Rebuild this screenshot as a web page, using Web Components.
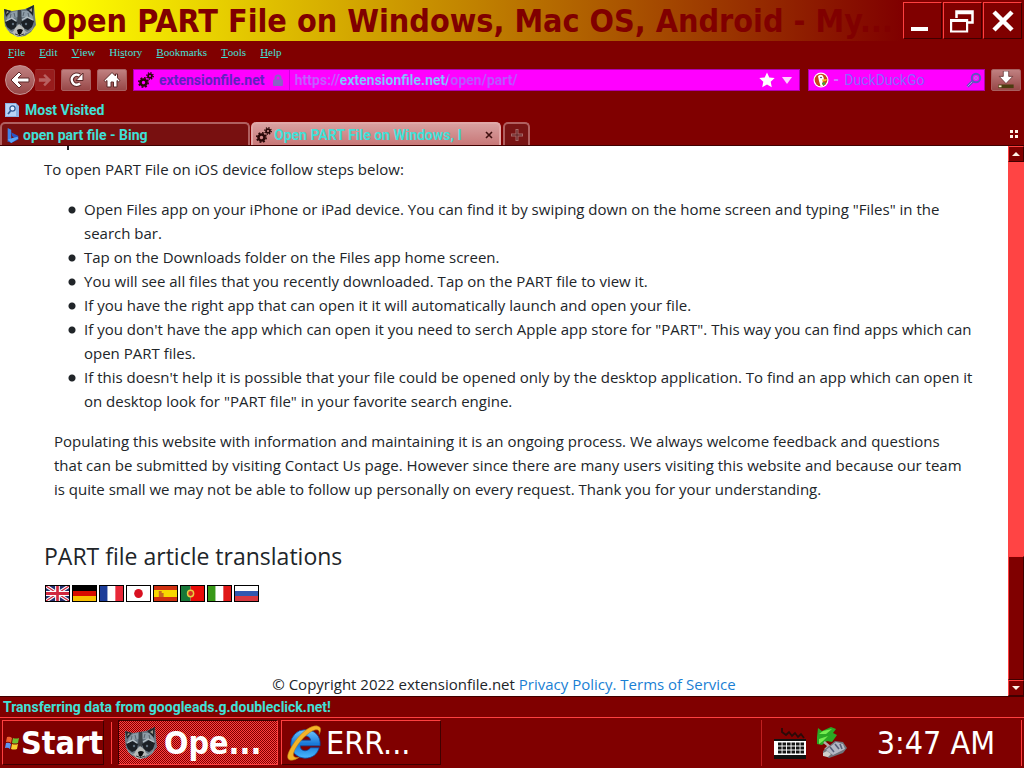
<!DOCTYPE html>
<html lang="en">
<head>
<meta charset="utf-8">
<title>Open PART File on Windows, Mac OS, Android</title>
<style>
  html, body { height: 100%; }
  body {
    margin: 0;
    overflow: hidden;
    --face: #800000;
    --hilite: #ff4040;
    --shadow: #400000;
    --text: #40e0d8;
    --field: #ff00ff;
    --caption: "DejaVu Sans Condensed", "DejaVu Sans", sans-serif;
    font: bold 14px/16px Roboto, "Liberation Sans", Arial, sans-serif;
    color: var(--text);
    background: var(--face);
  }
</style>
</head>
<body>
<desktop-screen>
  <title-bar slot="top" label="Open PART File on Windows, Mac OS, Android - My..."></title-bar>
  <menu-bar slot="top"></menu-bar>
  <nav-bar slot="top"></nav-bar>
  <bookmark-bar slot="top"></bookmark-bar>
  <tab-strip slot="top">
    <browser-tab icon="bing">open part file - Bing</browser-tab>
    <browser-tab icon="gears" active>Open PART File on Windows, I</browser-tab>
  </tab-strip>
  <article-page></article-page>
  <scroll-bar slot="side"></scroll-bar>
  <status-bar slot="bottom">Transferring data from googleads.g.doubleclick.net!</status-bar>
  <task-bar slot="bottom">
    <task-button icon="raccoon" active>Ope...</task-button>
    <task-button icon="ie">ERR...</task-button>
  </task-bar>
</desktop-screen>

<script>
const ICONS = {
  raccoon: `<svg viewBox="0 0 34 34">
    <path d="M2 5l8 2 6-1 7-1 9-4 1 12 1 8-5 7-6 4-7 1-8-4-5-7-1-8z" fill="#687783"/>
    <path d="M2 5l7 2-5 6zM32 1l-8 4 7 7z" fill="#22282c"/>
    <path d="M5 7l2 1-3 2zM30 4l-3 2 3 2z" fill="#a39c90"/>
    <path d="M10 8l5-1 1 6-6 1-6 4 2-6zM26 7l-6 0-1 6 5 0 8 4-2-6z" fill="#8d9ca7"/>
    <path d="M16 6h3l1 13-3 4-2-4z" fill="#3b4248"/>
    <path d="M12 9l1 4M22 8l-1 4M9 10l-1 4M26 9l1 4" stroke="#58646d" fill="none"/>
    <path d="M3 18l6-3 6 3-1 6-5 2-4-3zM32 17l-6-3-7 4 2 6 5 2 4-3z" fill="#1b2025"/>
    <path d="M4 22l2 4 4 2 4-3v5l-4-1-5-3zM31 22l-2 4-4 2-4-3v5l4-1 5-3z" fill="#a4acb0"/>
    <path d="M4 17l6-3 4 3M20 16l5-3 6 3" fill="none" stroke="#b8c2c6" stroke-width="1.2"/>
    <path d="M13 24l4-4 5 4 1 6-5 3-5-1-2-3z" fill="#b8bbb9"/>
    <path d="M15 26q3-2 6 0l-2 4h-3z" fill="#0b0d0f"/>
    <path d="M17.500 30v2M13 30q5 3 9 0" stroke="#33383b" fill="none"/>
    <circle cx="11" cy="20" r="1.200" fill="#62717d"/><circle cx="24" cy="20" r="1.200" fill="#62717d"/></svg>`,
  gears: `<svg viewBox="0 0 16 16" fill="none" stroke="#2a0808">
    <circle cx="5.500" cy="10.500" r="3" stroke-width="2.600"/>
    <circle cx="5.500" cy="10.500" r="4.700" stroke-width="1.600" stroke-dasharray="1.850 1.840"/>
    <circle cx="12" cy="4" r="1.900" stroke-width="1.800"/>
    <circle cx="12" cy="4" r="3.200" stroke-width="1.400" stroke-dasharray="1.260 1.250"/></svg>`,
  bing: `<svg viewBox="0 0 16 18"><path d="M2 1l4 2v11l-4 3z" fill="#3f83e8"/><path d="M6 6l8 4v4l-8 4-4-2 4-3 3-1-2-2z" fill="#2855c8"/><path d="M2 14l4-1 7-2 1 2-8 5z" fill="#58a5f5"/></svg>`,
  back: `<svg viewBox="0 0 20 20"><path d="M9 2L1 10l8 8 2.500-2.500L8 12h11V8H8l3.500-3.500z" fill="#fff" stroke="#5c2828" stroke-width="1"/></svg>`,
  forward: `<svg viewBox="0 0 16 16"><path d="M8 1l7 7-7 7-2-2 3-3H1V6h8L6 3z" fill="#b86060"/></svg>`,
  reload: `<svg viewBox="0 0 18 18"><path d="M13 12.500a5 5 0 1 1-.500-8" fill="none" stroke="#5c2828" stroke-width="4.500"/><path d="M9 9.500h7V2z" fill="#fff" stroke="#5c2828"/><path d="M13 12.500a5 5 0 1 1-.500-8" fill="none" stroke="#fff" stroke-width="2.500"/></svg>`,
  home: `<svg viewBox="0 0 18 18"><path d="M9 1.500L1 9.500l1.500 1.300L4 9.500V16h4v-5h2.500v5H14V9.500l1.500 1.300L17 9.500l-2.500-2.600V3h-2v2z" fill="#fff" stroke="#5c2828"/></svg>`,
  lock: `<svg viewBox="0 0 12 12"><path d="M3.500 6V4a2.500 2.500 0 0 1 5 0v2" fill="none" stroke="#8a63c4" stroke-width="2"/><rect x="1" y="5.500" width="10" height="6.500" rx="1" fill="#8a63c4"/></svg>`,
  star: `<svg viewBox="0 0 16 16"><path d="M8 .500l2.300 5 5.400.600-4 3.700 1.100 5.500L8 12.600l-4.800 2.700 1.100-5.500-4-3.700 5.400-.600z" fill="#fff"/></svg>`,
  drop: `<svg viewBox="0 0 10 8"><path d="M0 1h10L5 8z" fill="#ffd0ff"/></svg>`,
  duck: `<svg viewBox="0 0 16 16"><circle cx="8" cy="8" r="7.500" fill="#fff"/><circle cx="8" cy="8" r="6.300" fill="#c8451c"/><path d="M5 4q4-3 5.500 1l.5 3-1.500 2 .500 4H7.500L6 9z" fill="#fff"/><path d="M9 7.500l5-.500-1 2-3.500.500z" fill="#f8c21c"/><path d="M9 11l3-1v3l-3-.500z" fill="#42a83c"/><circle cx="8" cy="5.500" r=".8" fill="#234"/></svg>`,
  search: `<svg viewBox="0 0 16 16" fill="none"><path d="M7 9l-5.500 5.500" stroke="#5d55c0" stroke-width="3"/><path d="M7 9l-5.500 5.500" stroke="#d080e8"/><circle cx="10" cy="6" r="4.200" stroke="#5d55c0" stroke-width="2"/><circle cx="10" cy="6" r="1.500" stroke="#b080e8"/></svg>`,
  download: `<svg viewBox="0 0 20 20"><path d="M1.500 15h17v4h-17z" fill="#4b3c10"/><path d="M2 16h3v2H2z" fill="#f4e8c8"/><path d="M7 0h6v6h4.500L10 14 2.500 6H7z" fill="#fff" stroke="#5c2828" stroke-width=".8"/></svg>`,
  visited: `<svg viewBox="0 0 14 16"><path d="M0 1h11l3 3v11H0z" fill="#8cb4e4"/><path d="M1 2h10v12H1z" fill="#b8d4f4"/><circle cx="7.500" cy="6.500" r="2.600" fill="#e0eeff" stroke="#315a94" stroke-width="1.300"/><path d="M5.500 9L3 12" stroke="#315a94" stroke-width="1.800"/></svg>`,
  close: `<svg viewBox="0 0 8 8"><path d="M1 1l6 6M7 1L1 7" stroke="#401010" stroke-width="1.600"/></svg>`,
  plus: `<svg viewBox="0 0 12 12"><path d="M6 0v12M0 6h12" stroke="#a86868" stroke-width="3"/><path d="M6 1v10M1 6h10" stroke="#5c2020"/></svg>`,
  group: `<svg viewBox="0 0 8 8" fill="#fff4e8"><path d="M0 0h3v3H0zM5 0h3v3H5zM0 5h3v3H0zM5 5h3v3H5z"/></svg>`,
  minimize: `<svg viewBox="0 0 26 26"><path d="M1 19h17v4H1z" fill="#fff"/></svg>`,
  restore: `<svg viewBox="0 0 26 26"><path d="M6.500 10V3.500h16v11H18M6 5h17" fill="none" stroke="#fff" stroke-width="2.500"/><path d="M.500 12h16v11.500h-16zM.500 13h16" transform="translate(.600 0)" fill="#800000" stroke="#fff" stroke-width="2.200"/></svg>`,
  quit: `<svg viewBox="0 0 26 26"><path d="M4 4l18 18M22 4L4 22" stroke="#fff" stroke-width="4.500"/></svg>`,
  up: `<svg viewBox="0 0 8 8"><path d="M4 2l4 4H0z" fill="#fff4e8"/></svg>`,
  down: `<svg viewBox="0 0 8 8"><path d="M0 2h8L4 6z" fill="#fff4e8"/></svg>`,
  windows: `<svg viewBox="0 0 14 14"><path d="M2 1q3-1 5 1l-1 5Q4 5 1 6z" fill="#f06030"/><path d="M8 2q3 1 6 0l-1 5q-3 1-6 0z" fill="#70c030"/><path d="M1 7q3-1 5 1l-1 5q-2-2-5-1z" fill="#5c96f0"/><path d="M7 8q3 1 6 0l-1 5q-3 1-6 0z" fill="#f8d030"/></svg>`,
  ie: `<svg viewBox="0 0 38 38"><defs><linearGradient id="g" x2="0" y2="1"><stop stop-color="#70c8ff"/><stop offset=".5" stop-color="#1878d8"/><stop offset="1" stop-color="#48b8ff"/></linearGradient></defs>
    <path d="M20 5a14 14 0 0 0 0 30c8 0 13-4 15-11h-9c-4 5-11 4-11-2h21C37 11 30 5 20 5zm-5 11c1-6 10-6 11 0z" fill="url(#g)" stroke="#0c489c" stroke-width=".8"/>
    <path d="M35 10q4-8-2-9c-7-1-17 7-24 17-6 9-10 17-5 19 3 1 7-1 10-3-5 1-8 0-5-7C14 16 27 4 33 5q3 1 2 5z" fill="#f4b428" stroke="#b87810" stroke-width=".6"/></svg>`,
  keyboard: `<svg viewBox="0 0 34 34"><path d="M9 2v4l4 3 3-3 3 4 3-3 3 4 3-3 3 4" fill="none" stroke="#2a0a08" stroke-width="1.800"/><path d="M1 13h32v20H1z" fill="#111"/><path d="M1 15h32v14H1z" fill="#fff"/><path d="M5 18h26M5 22h26M5 26h26" stroke="#141414" stroke-width="3.200" stroke-dasharray="3.600 .900"/></svg>`,
  usb: `<svg viewBox="0 0 34 34"><path d="M2 11l1-9 4 3 9-4 5 2-3 4 4 2-5 7-5-1-5 4-5-1z" fill="#2aa824"/><path d="M4 8l4-3 9-2-6 5zM4 13l9-3-5 5-4 3z" fill="#74ec50"/><path d="M9 16l5 4-4 4" stroke="#b8a8a8" stroke-width="2.500" fill="none"/><path d="M8 25l12-10 8 1 4 6-4 5-14 5-6-3z" fill="#6f727a"/><path d="M11 24l10-8 7 2 2 5-12 6z" fill="#b4b8c4"/><path d="M15 21l4 5M20 18l4 5M25 18l2 5" stroke="#585e78" stroke-width="1.600"/><path d="M8 27l4-2 4 3-3 3-5-1z" fill="#cfcfcb"/></svg>`
}

const FLAGS = [
  ['English', '<path fill="#23306f" d="M0 0h24v15H0z"/><path d="M0 0l24 15M24 0L0 15" stroke="#fff" stroke-width="3.500"/><path d="M0 0l24 15M24 0L0 15" stroke="#d02840" stroke-width="1.200"/><path d="M12 0v15M0 7.500h24" stroke="#fff" stroke-width="5"/><path d="M12 0v15M0 7.500h24" stroke="#d02840" stroke-width="2.800"/>'],
  ['Deutsch', '<path d="M0 0h24v5H0z"/><path fill="#d80c00" d="M0 5h24v5H0z"/><path fill="#f8c000" d="M0 10h24v5H0z"/>'],
  ['Français', '<path fill="#1c3c98" d="M0 0h8v15H0z"/><path fill="#fff" d="M8 0h8v15H8z"/><path fill="#e82838" d="M16 0h8v15h-8z"/>'],
  ['日本語', '<path fill="#fff" d="M0 0h24v15H0z"/><circle cx="12" cy="7.500" r="4.500" fill="#d81020"/>'],
  ['Español', '<path fill="#d03010" d="M0 0h24v15H0z"/><path fill="#f8d800" d="M0 4h24v7H0z"/><path fill="#c86820" d="M5 5h3v2h2v4H5z"/>'],
  ['Português', '<path fill="#187838" d="M0 0h10v15H0z"/><path fill="#e80c08" d="M10 0h14v15H10z"/><circle cx="10" cy="7.500" r="3.200" fill="#d83020" stroke="#e8d040" stroke-width="1.500"/>'],
  ['Italiano', '<path fill="#389818" d="M0 0h8v15H0z"/><path fill="#fff" d="M8 0h8v15H8z"/><path fill="#e01818" d="M16 0h8v15h-8z"/>'],
  ['Русский', '<path fill="#fff" d="M0 0h24v5H0z"/><path fill="#3058b0" d="M0 5h24v5H0z"/><path fill="#d83840" d="M0 10h24v5H0z"/>']
]

// shared by every element: button reset and icon sizing
const BASE = `
  *, :host { box-sizing: border-box; }
  :host { display: flex; }
  button { font: inherit; color: inherit; margin: 0; padding: 0; border: 0; background: none; display: flex; align-items: center; }
  svg { display: block; width: 100%; height: 100%; }
  i { display: block; flex: none; width: 16px; height: 16px; }
`
const icon = (name, cls = '') => `<i class="${cls}" aria-hidden="true">${ICONS[name]}</i>`

class UiElement extends HTMLElement {
  constructor() {
    super()
    this.attachShadow({ mode: 'open' })
  }

  connectedCallback() {
    this.shadowRoot.innerHTML = `<style>${BASE}${this.css()}</style>${this.html()}`
  }

  css() { return '' }
  html() { return '<slot></slot>' }
}

customElements.define('desktop-screen', class extends UiElement {
  css() {
    return `
      :host { flex-direction: column; height: 100vh; }
      main { display: flex; flex: 1; min-height: 0; }
    `
  }
  html() {
    return `<slot name="top"></slot><main><slot></slot><slot name="side"></slot></main><slot name="bottom"></slot>`
  }
})

customElements.define('title-bar', class extends UiElement {
  css() {
    return `
      :host {
        flex: none; align-items: center; height: 41px; padding: 0 2px;
        background: linear-gradient(90deg, #ffff00 6%, #800000 88%);
      }
      h1 {
        flex: 1; min-width: 0; margin: 0 0 0 6px; overflow: hidden; white-space: nowrap;
        font: bold 32px/40px var(--caption); color: var(--face);
      }
      .face { width: 34px; height: 34px; }
      .buttons { display: flex; gap: 1px; }
      button {
        width: 39px; height: 37px; justify-content: center; background: var(--face);
        border: 1px solid; border-color: var(--hilite) var(--shadow) var(--shadow) var(--hilite);
      }
      button i { width: 26px; height: 26px; }
    `
  }
  html() {
    return `
      ${icon('raccoon', 'face')}
      <h1>${this.getAttribute('label')}</h1>
      <div class="buttons">
        <button aria-label="Minimize">${icon('minimize')}</button>
        <button aria-label="Restore">${icon('restore')}</button>
        <button aria-label="Close">${icon('quit')}</button>
      </div>`
  }
})

customElements.define('menu-bar', class extends UiElement {
  css() {
    return `
      :host { flex: none; gap: 14px; height: 21px; padding: 0 8px; font: 11px/20px "Liberation Serif", "Times New Roman", serif; }
      u { text-underline-offset: 1px; }
    `
  }
  html() {
    return ['<u>F</u>ile', '<u>E</u>dit', '<u>V</u>iew', 'Hi<u>s</u>tory', '<u>B</u>ookmarks', '<u>T</u>ools', '<u>H</u>elp']
      .map((item) => `<button>${item}</button>`)
      .join('')
  }
})

customElements.define('nav-bar', class extends UiElement {
  css() {
    return `
      :host { flex: none; align-items: center; gap: 6px; height: 36px; padding: 0 3px 0 5px; }
      .history { display: flex; align-items: center; }
      button.tool {
        justify-content: center; width: 30px; height: 22px; border-radius: 2px;
        background: linear-gradient(#c08080, #984848); border: 1px solid #a86060;
      }
      button.tool i { width: 18px; height: 18px; }
      button.back { width: 30px; height: 30px; border-radius: 50%; border-color: #c89898; }
      button.back i { width: 20px; height: 20px; }
      button.next { width: 20px; background: #981c1c; border: 1px solid #983030; border-left: 0; }
      button.next i { width: 14px; height: 14px; }
      .field { display: flex; align-items: center; height: 22px; background: var(--field); border: 1px solid #b000b0; }
      .url { flex: 1; margin-right: 2px; }
      .site { gap: 5px; height: 20px; padding: 0 5px 0 4px; color: #6020c0; border-right: 1px solid #d000e0; }
      .site i:last-child { width: 12px; height: 12px; margin-left: 2px; }
      input { min-width: 0; flex: 1; height: 20px; padding: 0 0 0 5px; border: 0; outline: 0; font: inherit; background: none; }
      #url {
        color: #c070ff; -webkit-text-fill-color: transparent;
        background: linear-gradient(90deg, #c060ff 49px, #80c8ff 49px 158px, #b858ff 158px);
        -webkit-background-clip: text; background-clip: text;
      }
      .field > button:not(.site) i { margin-right: 7px; }
      button.list i { width: 10px; height: 8px; }
      .find { width: 177px; padding-left: 4px; }
      .find b { margin: 0 0 0 4px; color: #d070ff; }
      #find::placeholder { color: #8868ff; opacity: 1; }
      .find button:last-child i { margin-right: 2px; }
      .find input { font-weight: normal; }
    `
  }
  html() {
    return `
      <div class="history">
        <button class="tool back" aria-label="Back">${icon('back')}</button>
        <button class="tool next" aria-label="Forward">${icon('forward')}</button>
      </div>
      <button class="tool" aria-label="Reload">${icon('reload')}</button>
      <button class="tool" aria-label="Home">${icon('home')}</button>
      <div class="field url">
        <button class="site">${icon('gears')}<span>extensionfile.net</span>${icon('lock')}</button>
        <input id="url" aria-label="Address" value="https://extensionfile.net/open/part/">
        <button aria-label="Bookmark">${icon('star')}</button>
        <button class="list" aria-label="History list">${icon('drop')}</button>
      </div>
      <div class="field find">
        ${icon('duck')}<b>-</b>
        <input id="find" aria-label="Search" placeholder="DuckDuckGo">
        <button aria-label="Go">${icon('search')}</button>
      </div>
      <button class="tool" aria-label="Downloads">${icon('download')}</button>`
  }
})

customElements.define('bookmark-bar', class extends UiElement {
  css() {
    return `
      :host { flex: none; height: 24px; padding: 0 5px; }
      button { gap: 6px; }
      i { width: 14px; }
    `
  }
  html() { return `<button>${icon('visited')}Most Visited</button>` }
})

customElements.define('tab-strip', class extends UiElement {
  css() {
    return `
      :host { flex: none; align-items: stretch; gap: 1px; height: 24px; padding-right: 6px; border-bottom: 1px solid var(--shadow); }
      .add {
        width: 27px; margin-left: 1px; justify-content: center; background: #781414;
        border: 2px solid #b06060; border-bottom: 0; border-radius: 5px 5px 0 0;
      }
      .add i { width: 12px; height: 12px; }
      .all { margin-left: auto; }
      .all i { width: 8px; height: 8px; }
    `
  }
  html() {
    return `<slot></slot><button class="add" aria-label="New tab">${icon('plus')}</button>
      <button class="all" aria-label="Tab groups">${icon('group')}</button>`
  }
})

customElements.define('browser-tab', class extends UiElement {
  css() {
    return `
      :host {
        flex: 0 1 250px; min-width: 0; align-items: center; padding: 0 6px 0 3px; background: #781010;
        border: 2px solid #b06060; border-bottom: 0; border-radius: 5px 5px 0 0;
      }
      :host([active]) { background: linear-gradient(#d8a0a0, #c87878); border-color: #e0a8a8; }
      .label { flex: 1; min-width: 0; margin: 0 10px 0 2px; overflow: hidden; white-space: nowrap; text-align: left; }
      .close i { width: 8px; height: 8px; }
    `
  }
  html() {
    const close = this.hasAttribute('active') ? `<button class="close" aria-label="Close tab">${icon('close')}</button>` : ''
    return `${icon(this.getAttribute('icon'))}<button class="label"><slot></slot></button>${close}`
  }
})

customElements.define('article-page', class extends UiElement {
  css() {
    return `
      :host {
        flex: 1; flex-direction: column; min-width: 0; overflow: hidden; padding: 0 32px; background: #fff;
        color: #212529; font: 15px/24px "Open Sans", "Noto Sans", sans-serif;
      }
      article { padding-left: 12px; }
      .tail { width: 2px; height: 4px; margin-left: 23px; background: #212529; }
      p { margin: 7px 0 16px; }
      ul { margin: 0 0 16px; padding-left: 24px; list-style: none; }
      li { padding-left: 16px; background: radial-gradient(circle at 4px 13px, #212529 3px, transparent 4px); }
      .note { margin: 0; padding: 0 10px; }
      h2 { margin: 40px 0 14px; font-size: 23px; font-weight: normal; line-height: 30px; }
      nav { display: flex; gap: 2px; padding-left: 1px; }
      nav a { width: 25px; height: 17px; border: 1px solid #000; }
      footer { margin-top: auto; text-align: center; }
      footer a { color: #1a7fd4; text-decoration: none; }
    `
  }
  html() {
    const flags = FLAGS
      .map(([name, art]) => `<a href="#" aria-label="${name}"><svg viewBox="0 0 24 15" preserveAspectRatio="none">${art}</svg></a>`)
      .join('')
    return `
      <article>
        <div class="tail"></div>
        <p>To open PART File on iOS device follow steps below:</p>
        <ul>
          <li>Open Files app on your iPhone or iPad device. You can find it by swiping down on the home screen and typing "Files" in the search bar.</li>
          <li>Tap on the Downloads folder on the Files app home screen.</li>
          <li>You will see all files that you recently downloaded. Tap on the PART file to view it.</li>
          <li>If you have the right app that can open it it will automatically launch and open your file.</li>
          <li>If you don't have the app which can open it you need to serch Apple app store for "PART". This way you can find apps which can open PART files.</li>
          <li>If this doesn't help it is possible that your file could be opened only by the desktop application. To find an app which can open it on desktop look for "PART file" in your favorite search engine.</li>
        </ul>
        <p class="note">Populating this website with information and maintaining it is an ongoing process. We always welcome feedback and questions that can be submitted by visiting Contact Us page. However since there are many users visiting this website and because our team is quite small we may not be able to follow up personally on every request. Thank you for your understanding.</p>
        <h2>PART file article translations</h2>
        <nav>${flags}</nav>
      </article>
      <footer>© Copyright 2022 extensionfile.net <a href="#">Privacy Policy.</a> <a href="#">Terms of Service</a></footer>`
  }
})

customElements.define('scroll-bar', class extends UiElement {
  css() {
    return `
      :host { flex: none; flex-direction: column; width: 16px; background: #ff4444; }
      button, .thumb {
        background: var(--face); border: 1px solid;
        border-color: var(--hilite) var(--shadow) var(--shadow) var(--hilite);
      }
      button { height: 16px; justify-content: center; }
      i { width: 8px; height: 8px; }
      .track { display: flex; flex-direction: column; justify-content: flex-end; flex: 1; }
      .thumb { height: 24%; }
    `
  }
  html() {
    return `<button aria-label="Up">${icon('up')}</button>
      <div class="track"><div class="thumb"></div></div>
      <button aria-label="Down">${icon('down')}</button>`
  }
})

customElements.define('status-bar', class extends UiElement {
  css() {
    return `:host { flex: none; align-items: center; height: 21px; padding: 0 3px; border-top: 1px solid var(--shadow); white-space: nowrap; }`
  }
})

customElements.define('task-bar', class extends UiElement {
  css() {
    return `
      :host {
        flex: none; align-items: stretch; gap: 3px; height: 51px; padding: 2px;
        border-top: 1px solid var(--hilite); font: 32px/44px var(--caption); color: #fff;
      }
      .start {
        width: 102px; height: 45px; gap: 2px; padding-left: 2px; font-weight: bold;
        border: 1px solid; border-color: var(--hilite) var(--shadow) var(--shadow) var(--hilite);
      }
      .start i { width: 14px; height: 14px; }
      .sep { width: 1px; margin: 2px 3px 2px 4px; background: var(--hilite); }
      .tray {
        display: flex; align-items: center; gap: 8px; margin-left: auto; padding: 0 26px 0 11px;
        border-left: 1px solid #c02020; border-right: 1px solid var(--hilite);
      }
      .tray i { width: 34px; height: 34px; }
      time { margin-left: 20px; }
    `
  }
  html() {
    return `<button class="start">${icon('windows')}Start</button><div class="sep"></div><slot></slot>
      <div class="tray">${icon('keyboard')}${icon('usb')}<time>3:47 AM</time></div>`
  }
})

customElements.define('task-button', class extends UiElement {
  css() {
    return `
      :host { flex: 0 1 160px; height: 45px; }
      button {
        width: 100%; gap: 4px; padding: 0 4px; white-space: nowrap;
        border: 1px solid; border-color: var(--hilite) var(--shadow) var(--shadow) var(--hilite);
      }
      i { width: 36px; height: 38px; }
      :host([active]) button {
        font-weight: bold; gap: 7px;
        border-color: var(--shadow) var(--hilite) var(--hilite) var(--shadow);
        background: repeating-conic-gradient(#ff4040 0 25%, #800000 0 50%) 0 0 / 2px 2px;
      }
      :host([active]) i { width: 34px; height: 34px; }
    `
  }
  html() { return `<button>${icon(this.getAttribute('icon'))}<slot></slot></button>` }
})
</script>
</body>
</html>
